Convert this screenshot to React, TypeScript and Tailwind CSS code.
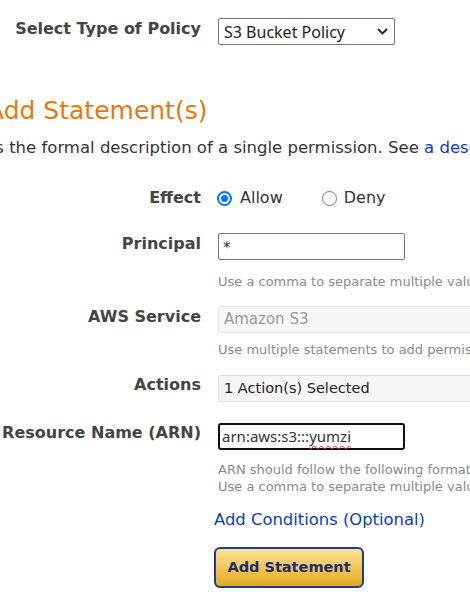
const labelCls =
  "w-[290px] shrink-0 text-right font-bold text-[16px] leading-[20px] text-[#444] whitespace-nowrap";

const HelpText = ({ lines }: { lines: string[] }) => (
  <div className="text-[13px] leading-[17px] text-[#8a8a8a] whitespace-nowrap">
    {lines.map((l) => (
      <div key={l}>{l}</div>
    ))}
  </div>
);

const Radio = ({ checked, className = "" }: { checked?: boolean; className?: string }) =>
  checked ? (
    <span
      className={
        "shrink-0 w-[15px] h-[15px] rounded-full border-2 border-[#0075ff] flex items-center justify-center " +
        className
      }
    >
      <span className="w-[7px] h-[7px] rounded-full bg-[#0075ff]" />
    </span>
  ) : (
    <span
      className={
        "shrink-0 block w-[15px] h-[15px] rounded-full border border-[#767676] bg-white " + className
      }
    />
  );

const App = () => {
  return (
    <div
      className="w-[470px] h-[601px] overflow-hidden bg-white text-[#333]"
      style={{ fontFamily: '"DejaVu Sans", Verdana, sans-serif' }}
    >
      <div className="-ml-[89px] w-[800px] pt-[18px]">
        {/* policy type */}
        <div className="flex items-start">
          <div className={labelCls + " pt-[1px]"}>Select Type of Policy</div>
          <div className="ml-[17px] w-[177px] h-[27px] border border-[#767676] rounded-[2px] flex items-center justify-between pl-[5px] pr-[6px]">
            <span
              className="text-[16px] text-[#222]"
              style={{ fontFamily: '"Noto Sans", "Open Sans", sans-serif' }}
            >
              S3 Bucket Policy
            </span>
            <svg width="11" height="7" viewBox="0 0 11 7">
              <path d="M1 1l4.5 4.5L10 1" fill="none" stroke="#222" strokeWidth="1.8" />
            </svg>
          </div>
        </div>

        {/* statement heading */}
        <h2 className="mt-[52px] pl-[76px] text-[25px] leading-[28px] text-[#e47911] whitespace-nowrap">
          Add Statement(s)
        </h2>
        <p className="mt-[13px] -ml-[27px] text-[16.5px] leading-[20px] text-[#333] whitespace-nowrap">
          A statement is the formal description of a single permission. See{" "}
          <a className="text-[#0b3fb8]">a description of elements</a> that you can use in statements.
        </p>

        {/* effect */}
        <div className="mt-[30px] flex items-start">
          <div className={labelCls}>Effect</div>
          <div className="ml-[16px] h-[20px] flex items-center text-[16px] text-[#333]">
            <Radio checked />
            <span className="ml-[8px]">Allow</span>
            <Radio className="ml-[39px]" />
            <span className="ml-[7px]">Deny</span>
          </div>
        </div>

        {/* principal */}
        <div className="mt-[25px] flex items-start">
          <div className={labelCls + " pt-[1px]"}>Principal</div>
          <div className="ml-[17px]">
            <div className="w-[187px] h-[27px] border border-[#767676] rounded-[2px] px-[4px] pt-[5px] text-[15px] leading-[18px] text-[#333]">
              *
            </div>
            <div className="mt-[13px]">
              <HelpText lines={["Use a comma to separate multiple values."]} />
            </div>
          </div>
        </div>

        {/* service */}
        <div className="mt-[16px] flex items-start">
          <div className={labelCls + " pt-[1px]"}>AWS Service</div>
          <div className="ml-[17px]">
            <div className="w-[330px] h-[27px] border border-[#e3e3e3] bg-[#f7f7f7] rounded-[2px] px-[5px] flex items-center text-[15px] text-[#999]">
              Amazon S3
            </div>
            <div className="mt-[8px]">
              <HelpText lines={["Use multiple statements to add permissions for more than one service."]} />
            </div>
          </div>
        </div>

        {/* actions */}
        <div className="mt-[17px] flex items-start">
          <div className={labelCls}>Actions</div>
          <div className="ml-[17px] w-[330px] h-[27px] border border-[#dcdcdc] bg-[#f6f6f6] rounded-[3px] px-[5px] flex items-center text-[14.5px] text-[#222]">
            1 Action(s) Selected
          </div>
        </div>

        {/* resource */}
        <div className="mt-[21px] flex items-start">
          <div className={labelCls}>Amazon Resource Name (ARN)</div>
          <div className="ml-[17px]">
            <div
              className="w-[187px] h-[27px] border-2 border-[#111] rounded-[3px] px-[2px] flex items-center text-[15px] text-[#333]"
              style={{ fontFamily: '"Noto Sans", "Open Sans", sans-serif' }}
            >
              arn:aws:s3:::
              <span className="underline decoration-wavy decoration-[#e02020] decoration-1 underline-offset-[3px]">
                yumzi
              </span>
            </div>
            <div className="mt-[11px]">
              <HelpText
                lines={[
                  "ARN should follow the following format: arn:aws:s3:::${BucketName}/${KeyName}.",
                  "Use a comma to separate multiple values.",
                ]}
              />
            </div>
          </div>
        </div>

        {/* conditions + submit */}
        <div className="ml-[303px]">
          <a className="mt-[15px] block text-[16.4px] leading-[20px] text-[#0b3fb8] whitespace-nowrap">
            Add Conditions (Optional)
          </a>
          <button className="mt-[17px] w-[150px] h-[41px] rounded-[6px] border-2 border-[#1f3b8c] bg-gradient-to-b from-[#fce38f] to-[#e3aa00] text-[14.5px] font-bold text-[#1b2c6e]">
            Add Statement
          </button>
        </div>
      </div>
    </div>
  );
};

export default App;
